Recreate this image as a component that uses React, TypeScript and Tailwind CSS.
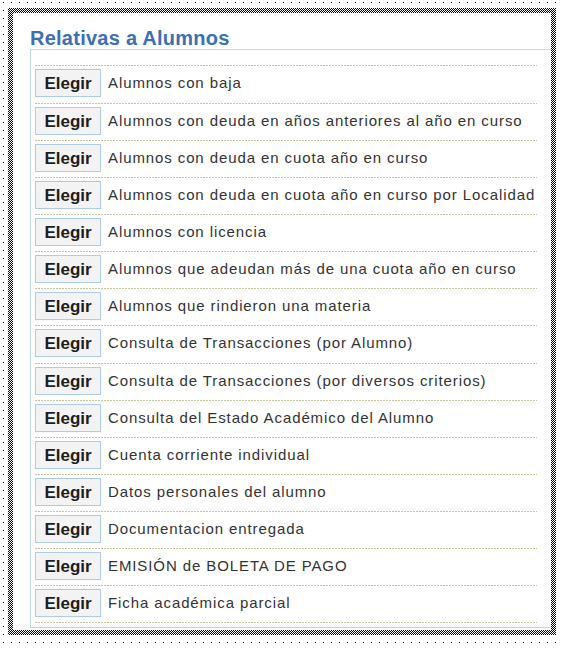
import React from "react";

const items = [
  "Alumnos con baja",
  "Alumnos con deuda en años anteriores al año en curso",
  "Alumnos con deuda en cuota año en curso",
  "Alumnos con deuda en cuota año en curso por Localidad",
  "Alumnos con licencia",
  "Alumnos que adeudan más de una cuota año en curso",
  "Alumnos que rindieron una materia",
  "Consulta de Transacciones (por Alumno)",
  "Consulta de Transacciones (por diversos criterios)",
  "Consulta del Estado Académico del Alumno",
  "Cuenta corriente individual",
  "Datos personales del alumno",
  "Documentacion entregada",
  "EMISIÓN de BOLETA DE PAGO",
  "Ficha académica parcial",
];

function Separator() {
  return (
    <div className="h-[1px] bg-[repeating-linear-gradient(to_right,#c3c39f_0px,#c3c39f_2px,transparent_2px,transparent_3px)]" />
  );
}

export default function App() {
  return (
    <div className="w-[567px] h-[649px] bg-white overflow-hidden font-['Liberation_Sans',Arial,sans-serif]">
      {/* sparse shadow dots */}
      <div className="ml-[2px] mt-[1px] w-[559px] h-[642px] pt-[7px] pl-[6px] pr-[5px] pb-[8px] bg-[radial-gradient(circle_at_1.5px_1.5px,#000_0.6px,transparent_0.9px)] bg-[length:8px_8px]">
        {/* dense frame */}
        <div className="h-full p-[5px] bg-[repeating-conic-gradient(#000_0%_25%,#fff_0%_50%)] bg-[length:2px_2px]">
          <div className="h-full bg-white overflow-hidden pl-[17px] pt-[14px]">
            <h1 className="h-[22px] leading-[22px] text-[20px] tracking-[0.25px] font-bold text-[#3c6fb5] whitespace-nowrap">
              Relativas a Alumnos
            </h1>
            <div className="border-t border-l border-b border-[#bcd7ee] pt-[15px] pb-[4px] pl-[4px]">
              <div className="w-[502px]">
                <Separator />
                {items.map((label, i) => (
                  <div key={label}>
                    <div
                      className={`${i === 0 || i === 7 ? "h-[37px]" : "h-[36px]"} pt-[3px] flex items-start`}
                    >
                      <button className="h-[28px] w-[66px] border border-[#aecbe8] bg-[#f3f3f3] text-[17px] font-bold text-[#1d1d1d] leading-none">
                        Elegir
                      </button>
                      <span className="ml-[7px] h-[28px] leading-[28px] text-[15px] tracking-[0.9px] text-[#333] whitespace-nowrap">
                        {label}
                      </span>
                    </div>
                    <Separator />
                  </div>
                ))}
              </div>
            </div>
          </div>
        </div>
      </div>
    </div>
  );
}
